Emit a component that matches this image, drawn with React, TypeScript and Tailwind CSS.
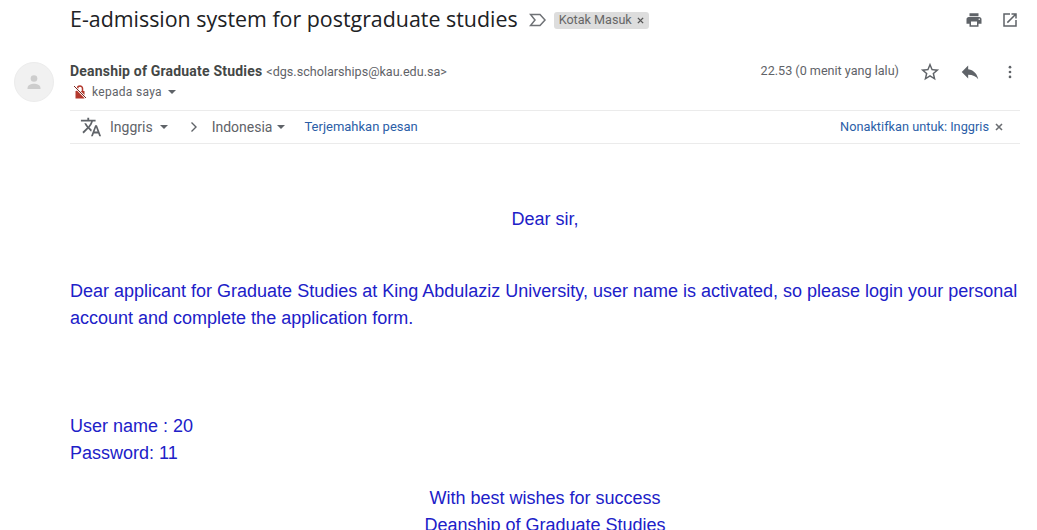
const sans = "font-['Roboto','Liberation_Sans',sans-serif]";
const arial = "font-['Liberation_Sans',Arial,sans-serif]";

function Caret() {
  return <span className="inline-block w-0 h-0 border-x-[4px] border-x-transparent border-t-[4px] border-t-[#5f6368]" />;
}

export default function App() {
  return (
    <div className={`w-[1037px] h-[530px] overflow-hidden bg-white ${sans}`}>
      <div className="flex items-center h-[38px] pl-[70px] pr-[18px]">
        <span className="text-[21.4px] leading-[28px] text-[#202124] font-['Open_Sans','Roboto',sans-serif]">E-admission system for postgraduate studies</span>
        <svg className="ml-[11px] mt-[1px] w-[18px] h-[14px]" viewBox="0 0 18 14" fill="none" stroke="#6f7276" strokeWidth="1.5">
          <path d="M1.5 1.5h9.5l5 5.5-5 5.5H1.5l4.5-5.5z" />
        </svg>
        <span className="ml-[7px] mt-[2px] flex items-center h-[17px] px-[5px] rounded-[3px] bg-[#dddddd] text-[12.6px] text-[#666666] gap-[5px] whitespace-nowrap">
          Kotak Masuk
          <svg className="w-[7px] h-[7px]" viewBox="0 0 8 8" stroke="#555" strokeWidth="1.6"><path d="M1 1l6 6M7 1L1 7" /></svg>
        </span>
        <div className="ml-auto mt-[2px] flex items-center gap-[18px]">
          <svg className="w-[18px] h-[18px]" viewBox="0 0 24 24" fill="#5f6368"><path d="M19 8H5c-1.66 0-3 1.34-3 3v6h4v4h12v-4h4v-6c0-1.66-1.34-3-3-3zm-3 11H8v-5h8v5zm3-7c-.55 0-1-.45-1-1s.45-1 1-1 1 .45 1 1-.45 1-1 1zm-1-9H6v4h12V3z" /></svg>
          <svg className="w-[18px] h-[18px]" viewBox="0 0 24 24" fill="#5f6368"><path d="M19 19H5V5h7V3H3v18h18v-9h-2v7zM14 3v2h3.59l-9.83 9.83 1.41 1.41L19 6.41V10h2V3h-7z" /></svg>
        </div>
      </div>

      <div className="flex pl-[14px] pr-[17px] pt-[24px]">
        <div className="w-[40px] h-[40px] rounded-full bg-[#f1f1f1] border border-[#ececec] flex items-center justify-center shrink-0">
          <svg className="w-[24px] h-[24px]" viewBox="0 0 24 24" fill="#cdcdcd"><circle cx="12" cy="8.5" r="3.3" /><path d="M5.5 18c0-3 4-4.2 6.5-4.2s6.5 1.2 6.5 4.2v1h-13z" /></svg>
        </div>
        <div className="ml-[16px] flex-1 min-w-0">
          <div className="flex h-[40px]">
            <div className="flex-1">
              <div className="h-[19px] leading-[18px] whitespace-nowrap">
                <span className="text-[14px] font-bold text-[#444746] tracking-[0.19px]">Deanship of Graduate Studies</span>
                <span className="ml-[4px] text-[12.6px] text-[#5f6368]">&lt;dgs.scholarships@kau.edu.sa&gt;</span>
              </div>
              <div className="flex items-center h-[21px]">
                <svg className="w-[16px] h-[16px] ml-[2px]" viewBox="0 0 16 16">
                  <path d="M3.5 7h9v7.5h-9z" fill="#b3392d" />
                  <path d="M5.5 7V4.5a2.5 2.5 0 0 1 5 0V7" fill="none" stroke="#b3392d" strokeWidth="1.5" />
                  <path d="M1.5 1.5l13 13" stroke="#fff" strokeWidth="2.2" />
                  <path d="M2 2l12 12" stroke="#7a2a22" strokeWidth="1" />
                </svg>
                <span className="ml-[4px] text-[12px] text-[#5f6368] tracking-[0.3px]">kepada saya</span>
                <span className="ml-[6px] flex items-center"><Caret /></span>
              </div>
            </div>
            <div className="flex items-start mr-[1px]">
              <span className="text-[12.6px] leading-[16px] text-[#5f6368] mr-[20px] mt-[1px]">22.53 (0 menit yang lalu)</span>
              <svg className="w-[22px] h-[22px] mr-[18px] -mt-[1px]" viewBox="0 0 24 24" fill="#5f6368"><path d="M22 9.24l-7.19-.62L12 2 9.19 8.63 2 9.24l5.46 4.73L5.82 21 12 17.27 18.18 21l-1.63-7.03L22 9.24zM12 15.4l-3.76 2.27 1-4.28-3.32-2.88 4.38-.38L12 6.1l1.71 4.04 4.38.38-3.32 2.88 1 4.28L12 15.4z" /></svg>
              <svg className="w-[22px] h-[22px] mr-[20px] -mt-[1px]" viewBox="0 0 24 24" fill="#5f6368"><path d="M10 9V5l-7 7 7 7v-4.1c5 0 8.5 1.6 11 5.1-1-5-4-10-11-11z" /></svg>
              <svg className="w-[18px] h-[18px] mt-[1px]" viewBox="0 0 24 24" fill="#5f6368"><circle cx="12" cy="5.5" r="1.8" /><circle cx="12" cy="12" r="1.8" /><circle cx="12" cy="18.5" r="1.8" /></svg>
            </div>
          </div>

          <div className="mt-[8px] h-[34px] flex items-center border-y border-[#ebebeb] pl-[10px] pr-[17px] text-[#5f6368]">
            <svg className="w-[22px] h-[22px]" viewBox="0 0 24 24" fill="#5f6368"><path d="M12.87 15.07l-2.54-2.51.03-.03c1.74-1.94 2.98-4.17 3.71-6.53H17V4h-7V2H8v2H1v1.99h11.17C11.5 7.92 10.44 9.75 9 11.35 8.07 10.32 7.3 9.19 6.69 8h-2c.73 1.63 1.73 3.17 2.98 4.56l-5.09 5.02L4 19l5-5 3.11 3.11.76-2.04zM18.5 10h-2L12 22h2l1.12-3h4.75L21 22h2l-4.5-12zm-2.62 7l1.62-4.33L19.12 17h-3.24z" /></svg>
            <span className="ml-[8px] text-[14px] text-[#5f6368]">Inggris</span>
            <span className="ml-[7px] flex items-center"><Caret /></span>
            <svg className="ml-[20px] w-[12px] h-[12px]" viewBox="0 0 12 12" fill="none" stroke="#5f6368" strokeWidth="1.4"><path d="M3.5 1.5L8 6l-4.5 4.5" /></svg>
            <span className="ml-[12px] text-[14px] text-[#5f6368]">Indonesia</span>
            <span className="ml-[5px] flex items-center"><Caret /></span>
            <span className="ml-[19px] text-[13px] text-[#2b5ea7]">Terjemahkan pesan</span>
            <span className="ml-auto text-[12.75px] text-[#2b5ea7]">Nonaktifkan untuk: Inggris</span>
            <svg className="ml-[6px] w-[8px] h-[8px]" viewBox="0 0 8 8" stroke="#6b6e72" strokeWidth="1.6"><path d="M1 1l6 6M7 1L1 7" /></svg>
          </div>

          <div className={`${arial} text-[18px] leading-[27px] text-[#2020c8]`}>
            <p className="mt-[62px] text-center">Dear sir,</p>
            <p className="mt-[45px] whitespace-nowrap">Dear applicant for Graduate Studies at King Abdulaziz University, user name is activated, so please login your personal<br />account and complete the application form.</p>
            <p className="mt-[81px]">User name : 20</p>
            <p>Password: 11</p>
            <div className="mt-[18px] text-center">
              <p>With best wishes for success</p>
              <p>Deanship of Graduate Studies</p>
            </div>
          </div>
        </div>
      </div>
    </div>
  );
}
